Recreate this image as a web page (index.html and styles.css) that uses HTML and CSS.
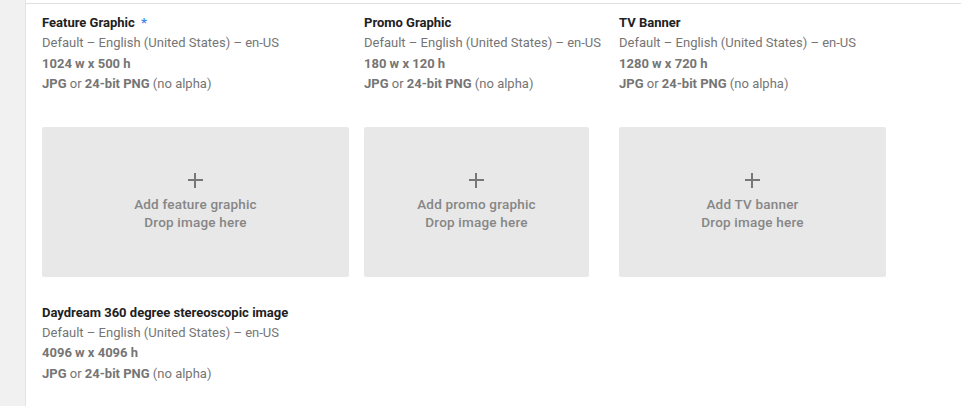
FILE: index.html
```html
<!DOCTYPE html>
<html lang="en">

<head>
    <meta charset="UTF-8">
    <meta name="viewport" content="width=device-width, initial-scale=1.0">
    <title>Graphic assets</title>
    <link rel="stylesheet" href="styles.css">
</head>

<body>
    <div class="page">
        <div class="rail"></div>
        <div class="main">
            <div class="section">
                <div class="assets">
                    <div class="asset">
                        <div class="title">Feature Graphic <span class="req">*</span></div>
                        <div class="meta">Default – English (United States) – en-US</div>
                        <div class="meta"><b>1024 w x 500 h</b></div>
                        <div class="meta"><b>JPG</b> or <b>24-bit PNG</b> (no alpha)</div>
                        <div class="drop drop-feature">
                            <span class="plus"></span>
                            <span>Add feature graphic</span>
                            <span>Drop image here</span>
                        </div>
                    </div>
                    <div class="asset">
                        <div class="title">Promo Graphic</div>
                        <div class="meta">Default – English (United States) – en-US</div>
                        <div class="meta"><b>180 w x 120 h</b></div>
                        <div class="meta"><b>JPG</b> or <b>24-bit PNG</b> (no alpha)</div>
                        <div class="drop drop-promo">
                            <span class="plus"></span>
                            <span>Add promo graphic</span>
                            <span>Drop image here</span>
                        </div>
                    </div>
                    <div class="asset">
                        <div class="title">TV Banner</div>
                        <div class="meta">Default – English (United States) – en-US</div>
                        <div class="meta"><b>1280 w x 720 h</b></div>
                        <div class="meta"><b>JPG</b> or <b>24-bit PNG</b> (no alpha)</div>
                        <div class="drop drop-tv">
                            <span class="plus"></span>
                            <span>Add TV banner</span>
                            <span>Drop image here</span>
                        </div>
                    </div>
                    <div class="asset">
                        <div class="title">Daydream 360 degree stereoscopic image</div>
                        <div class="meta">Default – English (United States) – en-US</div>
                        <div class="meta"><b>4096 w x 4096 h</b></div>
                        <div class="meta"><b>JPG</b> or <b>24-bit PNG</b> (no alpha)</div>
                    </div>
                </div>
            </div>
        </div>
    </div>
</body>

</html>
```

FILE: styles.css
```css
body {
    margin: 0;
    font-family: Roboto, "Liberation Sans", sans-serif;
    font-size: 13px;
    background: #fff;
    overflow: hidden;
}

.page {
    display: flex;
    min-height: 406px;
}

.rail {
    width: 25px;
    flex: none;
    background-color: #f1f1f1;
    border-right: 1px solid #e4e4e4;
}

.main {
    flex: 1;
    padding-top: 3px;
}

.section {
    border-top: 1px solid #e0e0e0;
    padding: 9px 16px 0 16px;
}

.assets {
    display: grid;
    grid-template-columns: 307px 240px auto;
    column-gap: 15px;
    row-gap: 26px;
    align-items: start;
}

.asset {
    display: flex;
    flex-direction: column;
    align-items: flex-start;
}

.title {
    color: #212121;
    font-weight: bold;
    line-height: 20px;
}

.req {
    color: #4285f4;
    margin-left: 3px;
}

.meta {
    color: #757575;
    line-height: 20.5px;
}

.meta b {
    font-weight: bold;
}

.drop {
    margin-top: 32px;
    height: 150px;
    box-sizing: border-box;
    padding-top: 6px;
    background-color: #e8e8e8;
    border-radius: 2px;
    display: flex;
    flex-direction: column;
    align-items: center;
    justify-content: center;
    color: #868686;
    font-size: 13.5px;
    font-weight: 500;
    line-height: 18px;
    letter-spacing: 0.2px;
}

.drop-feature {
    width: 307px;
}

.drop-promo {
    width: 225px;
}

.drop-tv {
    width: 267px;
}

.plus {
    position: relative;
    width: 15px;
    height: 15px;
    margin-bottom: 7px;
    margin-top: -5px;
}

.plus::before,
.plus::after {
    content: "";
    position: absolute;
    background-color: #777;
}

.plus::before {
    left: 0;
    right: 0;
    top: 6px;
    height: 2px;
}

.plus::after {
    top: 0;
    bottom: 0;
    left: 6px;
    width: 2px;
}
```
